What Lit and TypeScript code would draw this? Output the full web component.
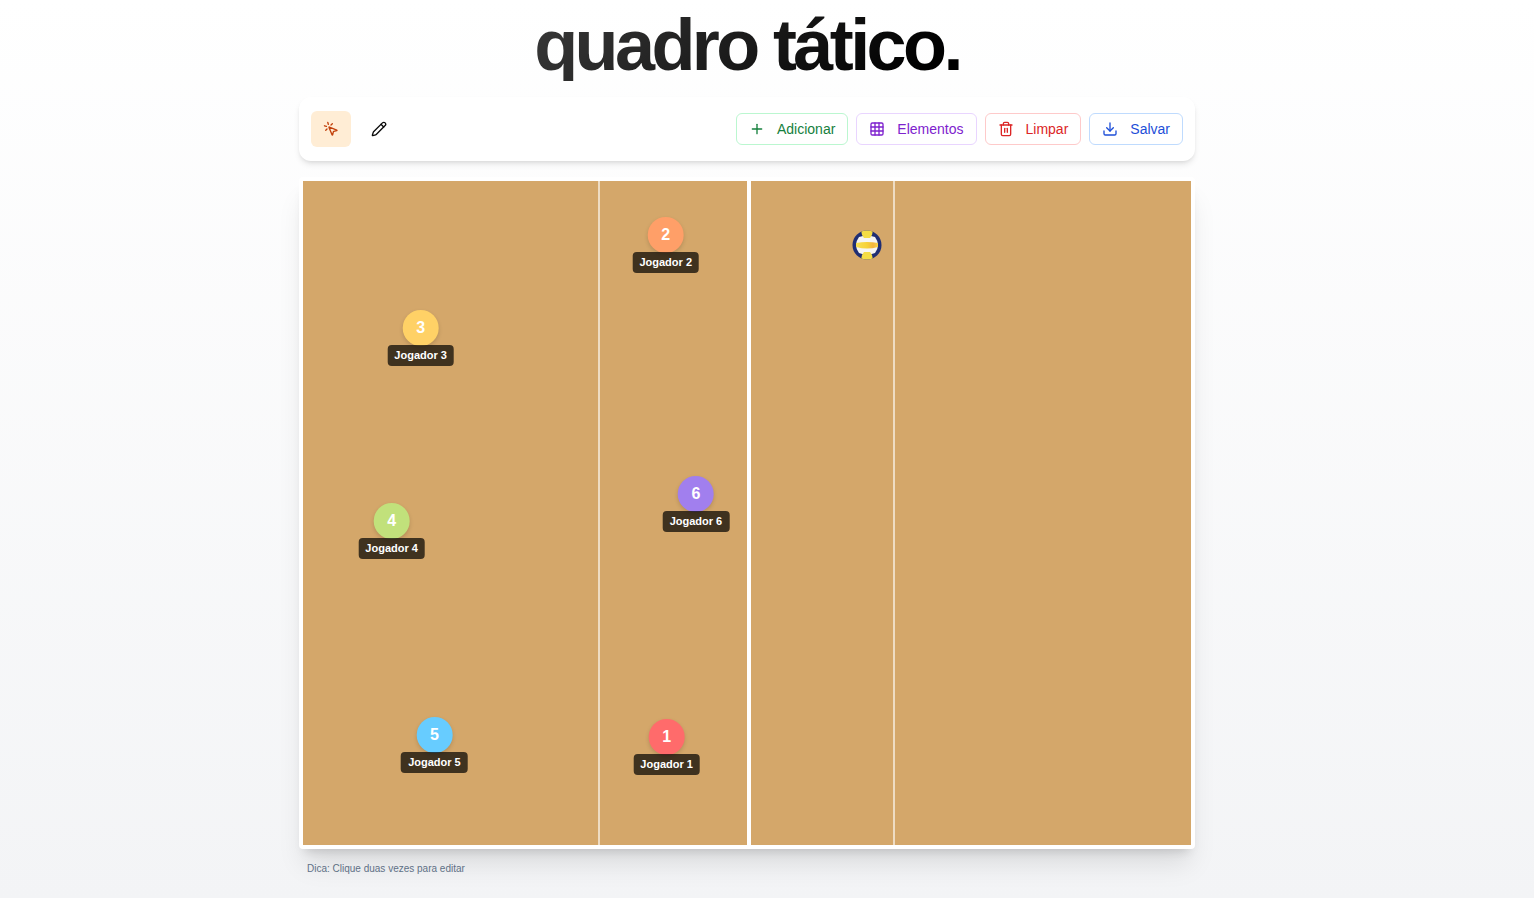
import { LitElement, html, css, svg } from "lit";
import { customElement, property, state } from "lit/decorators.js";
import { classMap } from "lit/directives/class-map.js";
import { styleMap } from "lit/directives/style-map.js";

interface Player {
  number: number;
  x: number;
  y: number;
  color: string;
}

/* x and y are percentages of the court. */
const PLAYERS: Player[] = [
  { number: 1, x: 40.95, y: 83.7, color: "#ff6b6b" },
  { number: 2, x: 40.85, y: 8.1, color: "#ff9f68" },
  { number: 3, x: 13.25, y: 22.1, color: "#ffd166" },
  { number: 4, x: 9.98, y: 51.2, color: "#c1e17b" },
  { number: 5, x: 14.8, y: 83.4, color: "#67ccff" },
  { number: 6, x: 44.25, y: 47.1, color: "#a17fee" },
];

const ICONS = {
  pointer: svg`<path d="M14 4.1 12 6"/><path d="m5.1 8-2.9-.8"/><path d="m6 12-1.9 2"/><path d="M7.2 2.2 8 5.1"/><path d="M9.037 9.69a.498.498 0 0 1 .653-.653l11 4.5a.5.5 0 0 1-.074.949l-4.349 1.041a1 1 0 0 0-.74.739l-1.04 4.35a.5.5 0 0 1-.95.074z"/>`,
  pencil: svg`<path d="M21.174 6.812a1 1 0 0 0-3.986-3.987L3.842 16.174a2 2 0 0 0-.5.83l-1.321 4.352a.5.5 0 0 0 .623.622l4.353-1.32a2 2 0 0 0 .83-.497z"/><path d="m15 5 4 4"/>`,
  plus: svg`<path d="M5 12h14"/><path d="M12 5v14"/>`,
  grid: svg`<rect width="18" height="18" x="3" y="3" rx="2"/><path d="M3 9h18"/><path d="M3 15h18"/><path d="M9 3v18"/><path d="M15 3v18"/>`,
  trash: svg`<path d="M3 6h18"/><path d="M19 6v14c0 1-1 2-2 2H7c-1 0-2-1-2-2V6"/><path d="M8 6V4c0-1 1-2 2-2h4c1 0 2 1 2 2v2"/><path d="M10 11v6"/><path d="M14 11v6"/>`,
  download: svg`<path d="M21 15v4a2 2 0 0 1-2 2H5a2 2 0 0 1-2-2v-4"/><path d="m7 10 5 5 5-5"/><path d="M12 15V3"/>`,
};

const icon = (name: keyof typeof ICONS) => html`<svg
  class="icon"
  viewBox="0 0 24 24"
  width="16"
  height="16"
  fill="none"
  stroke="currentColor"
  stroke-width="2"
  stroke-linecap="round"
  stroke-linejoin="round"
  aria-hidden="true"
>${ICONS[name]}</svg>`;

@customElement("player-marker")
export class PlayerMarker extends LitElement {
  @property({ type: Number }) number = 0;
  @property() color = "";

  static styles = css`
    :host {
      display: flex;
      flex-direction: column;
      align-items: center;
      cursor: grab;
    }
    .disc {
      display: grid;
      place-items: center;
      width: 36px;
      height: 36px;
      border-radius: 50%;
      color: #fff;
      font-weight: 700;
      font-size: 16px;
      line-height: 24px;
      box-shadow: 0 2px 4px rgba(0, 0, 0, 0.15);
    }
    .name {
      margin-top: -1px;
      padding: 3px 7px;
      border-radius: 4px;
      background: rgba(0, 0, 0, 0.7);
      color: #fff;
      font-weight: 700;
      font-size: 11px;
      line-height: 15px;
      white-space: nowrap;
      z-index: 1;
    }
  `;

  render() {
    return html`
      <div class="disc" style=${styleMap({ background: this.color })}>${this.number}</div>
      <div class="name">Jogador ${this.number}</div>
    `;
  }
}

@customElement("app-root")
export class AppRoot extends LitElement {
  @state() private tool: "select" | "draw" = "select";

  static styles = css`
    :host {
      display: block;
      box-sizing: border-box;
      min-height: 100vh;
      padding: 9px 40px 20px 0;
      background: linear-gradient(to bottom, #fff, #f3f4f6);
      font-family: "Liberation Sans", Arial, sans-serif;
    }
    .page {
      max-width: 896px;
      margin: 0 auto;
      display: flex;
      flex-direction: column;
    }
    h1 {
      align-self: center;
      margin: 0 0 16px;
      font-size: 72px;
      line-height: 72px;
      font-weight: 700;
      letter-spacing: -0.05em;
      color: transparent;
      background: linear-gradient(135deg, #3a3a3a, #000 90%);
      -webkit-background-clip: text;
      background-clip: text;
    }
    .toolbar {
      display: flex;
      align-items: center;
      justify-content: space-between;
      min-height: 40px;
      margin-bottom: 16px;
      padding: 12px;
      border-radius: 12px;
      background: #fff;
      box-shadow: 0 4px 6px -1px rgba(0, 0, 0, 0.1), 0 2px 4px -2px rgba(0, 0, 0, 0.1);
    }
    .group {
      display: flex;
      align-items: center;
      gap: 8px;
    }
    button {
      display: inline-flex;
      align-items: center;
      justify-content: center;
      font: inherit;
      cursor: pointer;
      background: #fff;
      border-radius: 6px;
    }
    .icon {
      display: block;
      flex: none;
    }
    .tool {
      width: 40px;
      height: 36px;
      padding: 0;
      border: 0;
      color: #0a0a0a;
    }
    .tool.active {
      background: #ffedd5;
      color: #c2410c;
    }
    .action {
      gap: 12px;
      height: 32px;
      padding: 0 12px;
      border: 1px solid;
      font-size: 14px;
      line-height: 20px;
    }
    .add {
      color: #15803d;
      border-color: #bbf7d0;
    }
    .elements {
      color: #7e22ce;
      border-color: #e9d5ff;
    }
    .clear {
      color: #dc2626;
      border-color: #fecaca;
    }
    .save {
      color: #1d4ed8;
      border-color: #bfdbfe;
    }
    .court {
      position: relative;
      aspect-ratio: 888 / 664;
      border: 4px solid #fff;
      border-radius: 4px;
      background: #d4a76a;
      background-clip: padding-box;
      box-shadow: 0 20px 25px -5px rgba(0, 0, 0, 0.1), 0 8px 10px -6px rgba(0, 0, 0, 0.15);
    }
    .lines {
      display: grid;
      grid-template-columns: 297fr 147fr 148fr 296fr;
      height: 100%;
    }
    .zone {
      border-right: 2px solid rgba(255, 255, 255, 0.6);
    }
    .net {
      border-left: 4px solid #fff;
    }
    .marker {
      position: absolute;
      transform: translate(-50%, -18px);
    }
    .ball {
      position: absolute;
      left: 63.5%;
      top: 9.7%;
      width: 30px;
      height: 30px;
      transform: translate(-50%, -50%);
    }
    .tip {
      margin: 12px 8px 0;
      font-size: 10px;
      line-height: 16px;
      color: #64748b;
    }
  `;

  private renderBall() {
    return html`<svg class="ball" viewBox="0 0 30 30" role="img" aria-label="Bola">
      <defs>
        <clipPath id="ball-clip"><circle cx="15" cy="15" r="14.500" /></clipPath>
        <linearGradient id="band" x1="0" x2="1">
          <stop offset="0" stop-color="#f8df52" />
          <stop offset="0.5" stop-color="#f6d238" />
          <stop offset="0.78" stop-color="#f3b53e" />
          <stop offset="1" stop-color="#f8d548" />
        </linearGradient>
      </defs>
      <g clip-path="url(#ball-clip)">
        <rect width="30" height="30" fill="#1f2e73" />
        <path d="M7 7Q15 4 23 7Q29 15 23 23Q15 26 7 23Q1 15 7 7z" fill="#f5f5f3" />
        <path d="M9 0h12l-1 5-2 3h-6l-2-3z" fill="#f4dd45" />
        <path d="M9 30h12l-1-5-2-3h-6l-2 3z" fill="#f4dd45" />
        <path d="M4 13q11-2 22 0v4q-11 3-22 0z" fill="url(#band)" />
      </g>
    </svg>`;
  }

  render() {
    return html`
      <main class="page">
        <h1>quadro tático.</h1>
        <div class="toolbar">
          <div class="group">
            <button
              class=${classMap({ tool: true, active: this.tool === "select" })}
              aria-label="Selecionar"
              @click=${() => (this.tool = "select")}
            >${icon("pointer")}</button>
            <button
              class=${classMap({ tool: true, active: this.tool === "draw" })}
              aria-label="Desenhar"
              @click=${() => (this.tool = "draw")}
            >${icon("pencil")}</button>
          </div>
          <div class="group">
            <button class="action add">${icon("plus")}Adicionar</button>
            <button class="action elements">${icon("grid")}Elementos</button>
            <button class="action clear">${icon("trash")}Limpar</button>
            <button class="action save">${icon("download")}Salvar</button>
          </div>
        </div>
        <section class="court" aria-label="Quadra">
          <div class="lines">
            <div class="zone"></div>
            <div></div>
            <div class="zone net"></div>
            <div></div>
          </div>
          ${PLAYERS.map(
            (p) => html`<player-marker
              class="marker"
              style=${styleMap({ left: `${p.x}%`, top: `${p.y}%` })}
              .number=${p.number}
              .color=${p.color}
            ></player-marker>`
          )}
          ${this.renderBall()}
        </section>
        <p class="tip">Dica: Clique duas vezes para editar</p>
      </main>
    `;
  }
}
